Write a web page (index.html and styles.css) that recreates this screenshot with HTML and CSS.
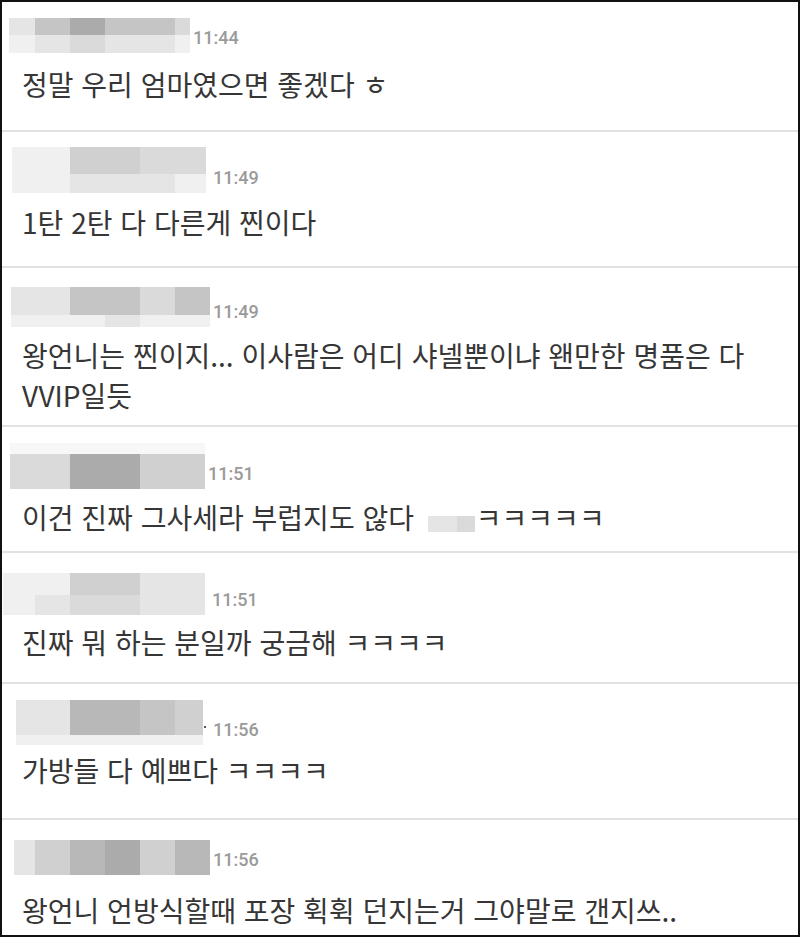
FILE: index.html
```html
<!DOCTYPE html>
<html lang="ko">
<head>
  <meta charset="UTF-8" />
  <meta name="viewport" content="width=device-width, initial-scale=1.0" />
  <title>댓글</title>
  <link rel="stylesheet" href="styles.css">
</head>
<body>
  <main class="comments">

    <div class="comment c1">
      <div class="meta">
        <div class="nick n1">
          <i class="s2"></i><i class="s5"></i><i class="s7"></i><i class="s5"></i><i class="s5"></i><i class="s3"></i>
          <i class="s1"></i><i class="s2"></i><i class="s3"></i><i class="s2"></i><i class="s2"></i><i class="s1"></i>
        </div>
        <span class="time">11:44</span>
      </div>
      <p class="body">정말 우리 엄마였으면 좋겠다 ㅎ</p>
    </div>

    <div class="comment c2">
      <div class="meta">
        <div class="nick n2">
          <i class="s1"></i><i class="s1"></i><i class="s4"></i><i class="s4"></i><i class="s3"></i><i class="s3"></i>
          <i class="s1"></i><i class="s1"></i><i class="s2"></i><i class="s2"></i><i class="s2"></i><i class="s1"></i>
        </div>
        <span class="time">11:49</span>
      </div>
      <p class="body">1탄 2탄 다 다른게 찐이다</p>
    </div>

    <div class="comment c3">
      <div class="meta">
        <div class="nick n3">
          <i class="s2"></i><i class="s2"></i><i class="s5"></i><i class="s5"></i><i class="s3"></i><i class="s5"></i>
          <i class="s1"></i><i class="s1"></i><i class="s1"></i><i class="s2"></i><i class="s1"></i><i class="s1"></i>
        </div>
        <span class="time">11:49</span>
      </div>
      <p class="body">왕언니는 찐이지... 이사람은 어디 샤넬뿐이냐 왠만한 명품은 다 VVIP일듯</p>
    </div>

    <div class="comment c4">
      <div class="meta">
        <div class="nick n4">
          <i class="s0"></i><i class="s0"></i><i class="s0"></i>
          <i class="s3"></i><i class="s7"></i><i class="s4"></i>
        </div>
        <span class="time">11:51</span>
      </div>
      <p class="body">이건 진짜 그사세라 부럽지도 않다 <span class="blot"><i class="s2"></i><i class="s3"></i></span>ㅋㅋㅋㅋㅋ</p>
    </div>

    <div class="comment c5">
      <div class="meta">
        <div class="nick n5">
          <i class="s1"></i><i class="s1"></i><i class="s4"></i><i class="s4"></i><i class="s2"></i>
          <i class="s1"></i><i class="s2"></i><i class="s3"></i><i class="s3"></i><i class="s2"></i>
        </div>
        <span class="time">11:51</span>
      </div>
      <p class="body">진짜 뭐 하는 분일까 궁금해 ㅋㅋㅋㅋ</p>
    </div>

    <div class="comment c6">
      <div class="meta">
        <div class="nick n6">
          <i class="s2"></i><i class="s2"></i><i class="s6"></i><i class="s5"></i><i class="s4"></i>
          <i class="s1"></i><i class="s1"></i><i class="s1"></i><i class="s1"></i><i class="s1"></i>
        </div>
        <span class="dot"></span>
        <span class="time">11:56</span>
      </div>
      <p class="body">가방들 다 예쁘다 ㅋㅋㅋㅋ</p>
    </div>

    <div class="comment c7">
      <div class="meta">
        <div class="nick n7">
          <i class="s2"></i><i class="s4"></i><i class="s6"></i><i class="s7"></i><i class="s4"></i><i class="s6"></i>
        </div>
        <span class="time">11:56</span>
      </div>
      <p class="body">왕언니 언방식할때 포장 휙휙 던지는거 그야말로 갠지쓰..</p>
    </div>

  </main>
</body>
</html>
```

FILE: styles.css
```css
body {
  margin: 0;
  background-color: #fff;
  color: #333;
  font-family: 'Noto Sans CJK KR', 'Noto Sans', sans-serif;
}
.comments {
  box-sizing: border-box;
  height: 937px;
  border: 2px solid #111;
  overflow: hidden;
}
.comment {
  border-bottom: 2px solid #e2e2e2;
}
.comment:last-child {
  border-bottom: none;
}
.meta {
  display: flex;
  align-items: flex-end;
}
.nick {
  display: grid;
}
.nick i,
.blot i {
  display: block;
}
.time {
  font-family: 'Roboto', sans-serif;
  font-size: 18px;
  font-weight: 500;
  line-height: 18px;
  color: #9a9a9a;
  margin: 0 0 6px 3px;
}
.dot {
  width: 2px;
  height: 2px;
  background: #555;
  margin: 0 0 17px 1px;
}
.body {
  margin: 0;
  padding: 0 20px;
  font-size: 28px;
  line-height: 40px;
  color: #363636;
  word-break: keep-all;
}
.blot {
  display: inline-flex;
  height: 16px;
  margin-left: 6px;
  margin-right: 1px;
  vertical-align: -3px;
}
.blot i:first-child { width: 29px; }
.blot i:last-child { width: 18px; }

/* pixelated name shades */
.s0 { background: #f7f7f7; }
.s1 { background: #f0f0f0; }
.s2 { background: #e5e5e5; }
.s3 { background: #dadada; }
.s4 { background: #d0d0d0; }
.s5 { background: #c5c5c5; }
.s6 { background: #b8b8b8; }
.s7 { background: #ababab; }

/* per-comment spacing, taken from the capture */
.c1 { padding: 16px 0 26px; }
.c1 .nick { margin-left: 7px; grid-template-columns: 26px 35px 35px 35px 35px 15px; grid-template-rows: 17px 18px; }
.c1 .body { margin-top: 11px; }

.c2 { padding: 15px 0 24px; }
.c2 .nick { margin-left: 10px; grid-template-columns: 23px 35px 35px 35px 35px 31px; grid-template-rows: 27px 19px; }
.c2 .time { margin-left: 7px; }
.c2 .body { margin-top: 9px; }

.c3 { padding: 19px 0 10px; }
.c3 .nick { margin-left: 9px; grid-template-columns: 24px 35px 35px 35px 35px 35px; grid-template-rows: 28px 12px; }
.c3 .body { margin-top: 8px; }

.c4 { padding: 16px 0 14px; }
.c4 .nick { margin-left: 8px; grid-template-columns: 60px 70px 65px; grid-template-rows: 11px 35px; }
.c4 .body { margin-top: 8px; }

.c5 { padding: 20px 0 20px; }
.c5 .nick { margin-left: 1px; grid-template-columns: 32px 35px 35px 35px 65px; grid-template-rows: 22px 20px; }
.c5 .time { margin-left: 7px; }
.c5 .body { margin-top: 7px; }

.c6 { padding: 16px 0 28px; }
.c6 .nick { margin-left: 14px; grid-template-columns: 19px 35px 70px 35px 28px; grid-template-rows: 35px 10px; }
.c6 .time { margin-left: 7px; }
.c6 .body { margin-top: 5px; }

.c7 { padding: 20px 0 0; }
.c7 .nick { margin-left: 12px; grid-template-columns: 21px 35px 35px 35px 35px 35px; grid-template-rows: 35px; }
.c7 .body { margin-top: 15px; }
```
